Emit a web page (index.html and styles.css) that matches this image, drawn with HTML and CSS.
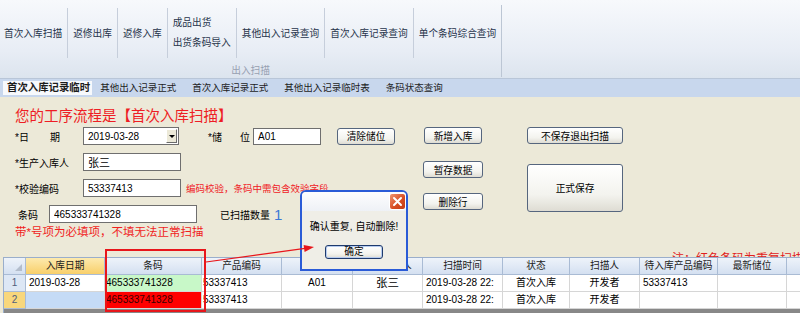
FILE: index.html
```html
<!DOCTYPE html>
<html>
    <head>
        <title>出入扫描</title>
        <meta charset="UTF-8">
        <link rel="stylesheet" href="styles.css">
    </head>
    <body>

        <div class="ribbon">
            <div class="group">
                <div class="group-btns">
                    <div class="rbtn first">首次入库扫描</div>
                    <div class="rsep"></div>
                    <div class="rbtn">返修出库</div>
                    <div class="rsep"></div>
                    <div class="rbtn">返修入库</div>
                    <div class="rsep"></div>
                    <div class="rbtn two"><span>成品出货</span><span>出货条码导入</span></div>
                    <div class="rsep"></div>
                    <div class="rbtn">其他出入记录查询</div>
                    <div class="rsep"></div>
                    <div class="rbtn">首次入库记录查询</div>
                    <div class="rsep"></div>
                    <div class="rbtn">单个条码综合查询</div>
                </div>
                <div class="group-name">出入扫描</div>
            </div>
            <div class="gsep"></div>
        </div>

        <ul class="tabs">
            <li class="tab active">首次入库记录临时</li>
            <li class="tab">其他出入记录正式</li>
            <li class="tab">首次入库记录正式</li>
            <li class="tab">其他出入记录临时表</li>
            <li class="tab">条码状态查询</li>
        </ul>

        <div class="form">
            <div class="flow-title">您的工序流程是【首次入库扫描】</div>
            <div class="form-body">
                <div class="fields">
                    <div class="frow">
                        <label class="lbl-date"><span>*日</span><span>期</span></label>
                        <div class="combo"><span>2019-03-28</span><span class="drop"><i class="tri"></i></span></div>
                        <label class="lbl-loc"><span>*储</span><span>位</span></label>
                        <input class="tb tb-loc" value="A01">
                        <button class="btn btn-clear">清除储位</button>
                    </div>
                    <div class="frow">
                        <label class="lbl">*生产入库人</label>
                        <input class="tb tb-wide tb-person" value="张三">
                    </div>
                    <div class="frow">
                        <label class="lbl">*校验编码</label>
                        <input class="tb tb-wide" value="53337413">
                        <span class="hint">编码校验，条码中需包含效验字段</span>
                    </div>
                    <div class="frow">
                        <label class="lbl-code">条码</label>
                        <input class="tb tb-barcode" value="465333741328">
                        <span class="scan-label">已扫描数量</span>
                        <span class="scan-count">1</span>
                    </div>
                    <div class="note">带*号项为必填项，不填无法正常扫描</div>
                </div>
                <div class="actions">
                    <button class="btn btn-add">新增入库</button>
                    <button class="btn btn-hold">暂存数据</button>
                    <button class="btn btn-delrow">删除行</button>
                </div>
                <div class="save">
                    <button class="btn">不保存退出扫描</button>
                    <button class="btn btn-save">正式保存</button>
                </div>
            </div>
            <div class="hidden-note"><span>注：红色条码为重复扫描，确认后自动删除</span></div>
        </div>

        <div class="grid">
            <div class="grow ghead">
                <div class="cell hcell corner"><i class="corner-tri"></i></div>
                <div class="cell hcell sel">入库日期</div>
                <div class="cell hcell">条码</div>
                <div class="cell hcell">产品编码</div>
                <div class="cell hcell">储位</div>
                <div class="cell hcell">生产入库人</div>
                <div class="cell hcell">扫描时间</div>
                <div class="cell hcell">状态</div>
                <div class="cell hcell">扫描人</div>
                <div class="cell hcell">待入库产品编码</div>
                <div class="cell hcell">最新储位</div>
                <div class="cell hcell"></div>
            </div>
            <div class="grow">
                <div class="cell rh">1</div>
                <div class="cell">2019-03-28</div>
                <div class="cell bc ok">465333741328</div>
                <div class="cell bc">53337413</div>
                <div class="cell center">A01</div>
                <div class="cell center big">张三</div>
                <div class="cell">2019-03-28 22:</div>
                <div class="cell center">首次入库</div>
                <div class="cell center">开发者</div>
                <div class="cell">53337413</div>
                <div class="cell"></div>
                <div class="cell"></div>
            </div>
            <div class="grow">
                <div class="cell rh sel">2</div>
                <div class="cell cur"></div>
                <div class="cell bc dup">465333741328</div>
                <div class="cell bc">53337413</div>
                <div class="cell"></div>
                <div class="cell"></div>
                <div class="cell">2019-03-28 22:</div>
                <div class="cell center">首次入库</div>
                <div class="cell center">开发者</div>
                <div class="cell"></div>
                <div class="cell"></div>
                <div class="cell"></div>
            </div>
        </div>

        <div class="dialog">
            <div class="dialog-bar">
                <span class="dialog-close">
                    <svg width="11" height="11" viewBox="0 0 11 11"><path d="M2 2L9 9M9 2L2 9" stroke="#fff" stroke-width="2" stroke-linecap="round"/></svg>
                </span>
            </div>
            <div class="dialog-text">确认重复, 自动删除!</div>
            <button class="btn dialog-ok">确定</button>
        </div>

        <svg class="marks" width="800" height="313" viewBox="0 0 800 313">
            <rect x="106" y="250" width="99" height="61" fill="none" stroke="#e8161b" stroke-width="2"/>
            <line x1="206" y1="262" x2="305" y2="248.4" stroke="#e8161b" stroke-width="1.2"/>
            <polygon points="314,247 304.6,251.9 303.6,244.9" fill="#e8161b"/>
        </svg>

    </body>
</html>
```

FILE: styles.css
```css
*
{
    box-sizing: border-box;
}
html, body
{
    margin: 0;
    padding: 0;
}
body
{
    position: relative;
    width: 800px;
    height: 313px;
    overflow: hidden;
    background: #ece9d8;
    font-family: "Liberation Sans", "Noto Sans CJK SC", sans-serif;
    font-size: 10px;
    color: #000;
}

/* ribbon */
.ribbon
{
    display: flex;
    height: 79px;
    background: linear-gradient(#f7f9fc, #e8edf5 65%, #dce4ee);
    border-bottom: 1px solid #b9c6d8;
}
.group
{
    display: flex;
    flex-direction: column;
}
.group-btns
{
    display: flex;
    height: 50px;
    margin-top: 8px;
}
.rbtn
{
    display: flex;
    align-items: center;
    padding: 0 5px;
    font-size: 9.7px;
    color: #27344b;
    white-space: nowrap;
}
.rbtn.first
{
    padding-left: 4px;
}
.rbtn.two
{
    flex-direction: column;
    justify-content: center;
    align-items: flex-start;
    line-height: 20px;
}
.rsep
{
    width: 1px;
    background: #c6cedb;
}
.group-name
{
    margin-top: 7px;
    line-height: 12px;
    text-align: center;
    font-size: 9.7px;
    color: #98a1b2;
}
.gsep
{
    width: 1px;
    margin: 5px 0 1px;
    background: #bcc6d4;
}

/* tabs */
.tabs
{
    display: flex;
    align-items: flex-start;
    height: 18px;
    margin: 0;
    padding: 0 0 0 3px;
    list-style: none;
    background: #c8d7ed;
}
.tab
{
    padding: 0 8px;
    line-height: 18px;
    font-size: 9.5px;
    color: #1d1d1d;
    white-space: nowrap;
}
.tab.active
{
    margin-top: 2px;
    padding: 0 2px 0 4px;
    line-height: 14px;
    font-size: 10.4px;
    font-weight: bold;
    background: #f7f9fc;
}

/* form */
.form
{
    display: flex;
    flex-direction: column;
    height: 160px;
    padding: 10px 0 0 15px;
    overflow: hidden;
}
.flow-title
{
    height: 18px;
    font-size: 14.5px;
    line-height: 18px;
    color: #ee1d24;
}
.form-body
{
    display: flex;
    margin-top: 2px;
}
.fields
{
    display: flex;
    flex-direction: column;
    gap: 8px;
    width: 408px;
}
.frow
{
    display: flex;
    align-items: center;
    height: 18px;
    white-space: nowrap;
}
.lbl
{
    width: 68px;
}
.lbl-date
{
    display: flex;
    justify-content: space-between;
    width: 45px;
    margin-right: 23px;
}
.lbl-loc
{
    display: flex;
    justify-content: space-between;
    width: 42px;
    margin: 0 3px 0 29px;
}
.lbl-code
{
    width: 34px;
    padding-left: 3px;
}
.combo
{
    display: flex;
    align-items: center;
    justify-content: space-between;
    width: 96px;
    height: 18px;
    padding: 0 1px 0 4px;
    background: #fff;
    border: 1px solid #6f6f6f;
}
.drop
{
    display: flex;
    align-items: center;
    justify-content: center;
    width: 11px;
    height: 14px;
    border: 1px solid;
    border-color: #fff #6b6b6b #6b6b6b #fff;
    background: #ece9d8;
}
.tri
{
    width: 0;
    height: 0;
    border-left: 3px solid transparent;
    border-right: 3px solid transparent;
    border-top: 3px solid #000;
}
.tb
{
    height: 18px;
    padding: 0 4px;
    border: 1px solid #6f6f6f;
    background: #fff;
    font: inherit;
    color: #000;
    outline: none;
}
.tb-loc
{
    width: 68px;
    height: 17px;
}
.tb-wide
{
    width: 98px;
}
.tb-person
{
    font-size: 11px;
}
.tb-barcode
{
    width: 148px;
}
.btn
{
    height: 17px;
    padding: 0;
    border: 1px solid #56667e;
    border-radius: 3px;
    background: linear-gradient(#ffffff, #f3f3ee 65%, #dedcd3);
    font: inherit;
    font-size: 9.7px;
    color: #000;
}
.btn-clear
{
    width: 58px;
    margin-left: 16px;
}
.hint
{
    margin-left: 5px;
    font-size: 9.5px;
    color: #f0201f;
}
.scan-label
{
    margin-left: 23px;
}
.scan-count
{
    margin-left: 4px;
    font-size: 15px;
    color: #3b78d6;
}
.note
{
    height: 14px;
    margin-top: -6px;
    font-size: 11.5px;
    line-height: 14px;
    color: #f01e1e;
    white-space: nowrap;
}
.actions
{
    display: flex;
    flex-direction: column;
    width: 60px;
}
.btn-add
{
    width: 58px;
    margin-left: 1px;
}
.btn-hold
{
    margin-top: 17px;
}
.btn-delrow
{
    margin-top: 15px;
}
.save
{
    display: flex;
    flex-direction: column;
    width: 96px;
    margin-left: 44px;
}
.btn-save
{
    height: 48px;
    margin-top: 20px;
}
/* a label mostly hidden under the grid: only the tops of its glyphs show */
.hidden-note
{
    flex: none;
    height: 5px;
    margin: auto 0 0 657px;
    overflow: hidden;
    font-size: 12px;
    line-height: 12px;
    color: #e02020;
    white-space: nowrap;
}
.hidden-note span
{
    display: block;
    margin-top: 1px;
}

/* grid */
.grid
{
    position: relative;
    z-index: 1;
    height: 56px;
    margin-left: 3px;
    background: #888888;
    border-top: 1px solid #9aaecb;
    border-left: 1px solid #9aaecb;
    overflow: hidden;
}
.grow
{
    display: grid;
    grid-template-columns: 22px 79px 97px 80px 71px 70px 80px 67px 70px 78px 69px 40px;
    height: 17px;
}
.cell
{
    padding: 0 3px;
    line-height: 16px;
    background: #fff;
    border-right: 1px solid #d6d6d6;
    border-bottom: 1px solid #d6d6d6;
    white-space: nowrap;
    overflow: hidden;
}
.hcell
{
    text-align: center;
    font-size: 9.7px;
    color: #1c1c1c;
    background: linear-gradient(#eef3fa, #d4e0f1);
    border-color: #a9bbd4;
}
.hcell.sel
{
    background: linear-gradient(#fdeaae, #f8cf6a);
}
.corner
{
    display: flex;
    align-items: flex-end;
    justify-content: flex-end;
    padding: 0 3px 3px 0;
}
.corner-tri
{
    width: 0;
    height: 0;
    border-left: 7px solid transparent;
    border-bottom: 7px solid #b3bdcc;
}
.rh
{
    text-align: center;
    color: #50607c;
    background: #dde7f5;
    border-color: #a9bbd4;
}
.rh.sel
{
    background: #f8d77c;
}
.center
{
    text-align: center;
}
.big
{
    font-size: 11.5px;
}
.bc
{
    padding-left: 1px;
}
.ok
{
    background: #c8f8c8;
}
.dup
{
    background: #ff0000;
    color: #3a0000;
}
.cur
{
    background: #c5dbf6;
}

/* message box */
.dialog
{
    position: absolute;
    z-index: 2;
    left: 300px;
    top: 190px;
    width: 108px;
    height: 81px;
    background: #efeee7;
    border: 2px solid #2a5bd7;
    border-radius: 6px 6px 0 0;
    text-align: center;
}
.dialog-bar
{
    display: flex;
    justify-content: flex-end;
    align-items: flex-start;
    height: 19px;
    padding: 1px 0 0 0;
    background: linear-gradient(#fdfdfe, #eef1f6);
    border-radius: 4px 4px 0 0;
}
.dialog-close
{
    display: flex;
    align-items: center;
    justify-content: center;
    width: 17px;
    height: 17px;
    border: 1px solid #fff;
    border-radius: 3px;
    background: linear-gradient(135deg, #f09570, #d64b20 60%, #c23c15);
}
.dialog-text
{
    margin-top: 9px;
    line-height: 14px;
    white-space: nowrap;
}
.dialog-ok
{
    display: block;
    width: 58px;
    height: 14px;
    margin: 11px auto 0;
    line-height: 12px;
    border-color: #1f3b6d;
    box-shadow: inset 0 0 0 1px #b6cbef;
}

.marks
{
    position: absolute;
    z-index: 3;
    left: 0;
    top: 0;
    pointer-events: none;
}
```
